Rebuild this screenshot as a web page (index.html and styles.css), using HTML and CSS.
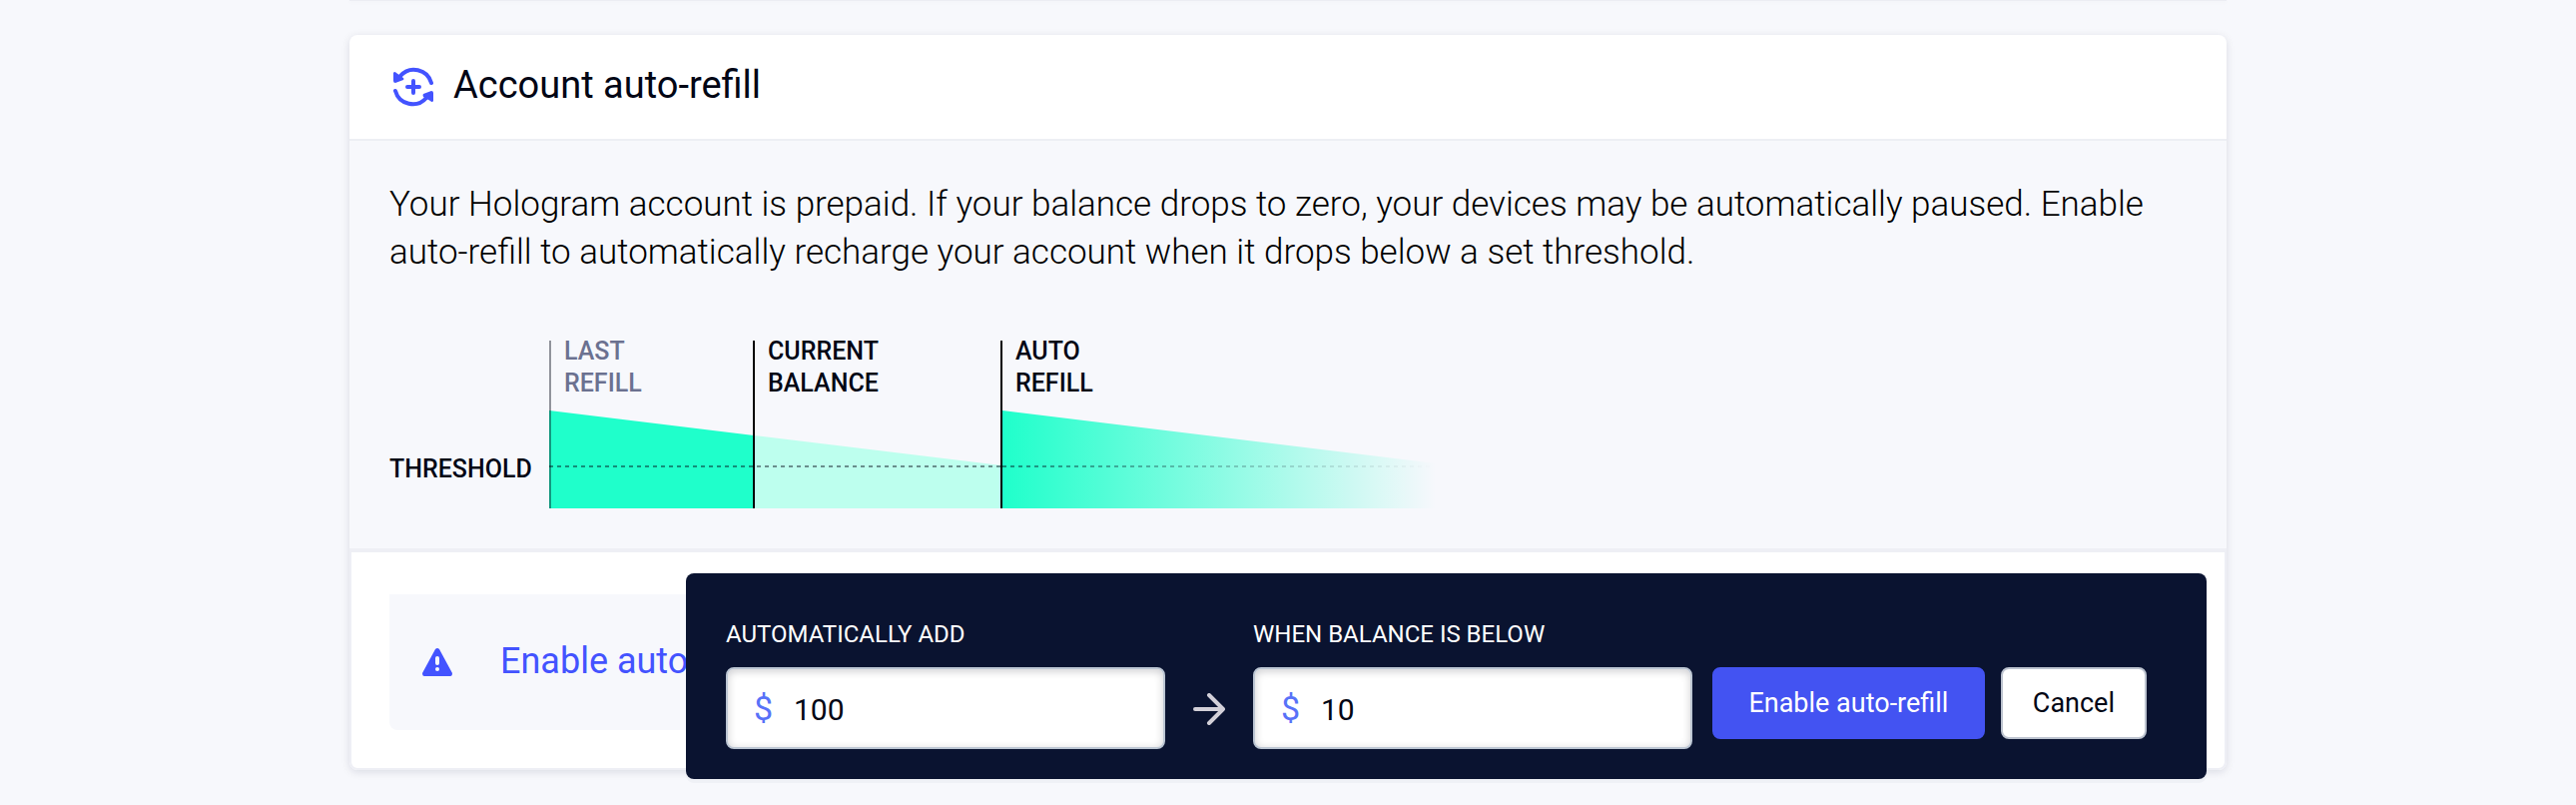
FILE: index.html
```html
<!DOCTYPE html>
<html lang="en">
<head>
<meta charset="utf-8">
<meta name="viewport" content="width=device-width, initial-scale=1">
<title>Account auto-refill</title>
<link rel="stylesheet" href="styles.css">
</head>
<body>
<main class="page">
  <div class="previous-card"></div>
  <section class="card">
    <header class="card-header">
      <svg class="refill-icon" viewBox="0 0 40 40" aria-hidden="true">
        <g fill="none" stroke="#4353ff" stroke-width="4" stroke-linecap="round">
          <path d="M7 9A18 18 0 0 1 38 16"/>
          <path d="M33 31A18 18 0 0 1 2 24"/>
          <path d="M20 14V26M14 20H26"/>
        </g>
        <path d="M0 6Q1 4 3 6L10 11Q11 12 10 13L2 16Q0 16 0 14Z" fill="#4353ff"/>
        <path d="M40 34Q39 36 37 34L30 30Q29 28 30 27L38 24Q40 24 40 26Z" fill="#4353ff"/>
      </svg>
      <h2 class="card-title">Account auto-refill</h2>
    </header>
    <div class="card-body">
      <p class="intro">Your Hologram account is prepaid. If your balance drops to zero, your devices may be automatically paused. Enable auto-refill to automatically recharge your account when it drops below a set threshold.</p>
      <div class="chart">
        <div class="threshold-label">THRESHOLD</div>
        <div class="plot">
          <svg class="plot-shape" viewBox="0 0 888 174" aria-hidden="true">
            <defs>
              <linearGradient id="fade" x1="0" x2="1" y1="0" y2="0">
                <stop offset="0" stop-color="#1fffcb"/>
                <stop offset="1" stop-color="#1fffcb" stop-opacity="0"/>
              </linearGradient>
              <linearGradient id="dash-fade" gradientUnits="userSpaceOnUse" x1="454" x2="888" y1="0" y2="0">
                <stop offset="0" stop-color="#020615" stop-opacity=".45"/>
                <stop offset="1" stop-color="#020615" stop-opacity="0"/>
              </linearGradient>
            </defs>
            <path d="M0 76L205 101V174H0Z" fill="#1fffcb"/>
            <path d="M205 101L453 131V174H205Z" fill="#bdffee"/>
            <path d="M454 76L888 129V174H454Z" fill="url(#fade)"/>
            <path d="M0 132H452" stroke="#020615" stroke-opacity=".45" stroke-width="2" stroke-dasharray="4 4"/>
            <path d="M454 131H888V133H454Z" fill="url(#dash-fade)" mask="url(#dashes)"/>
            <mask id="dashes" maskUnits="userSpaceOnUse" x="454" y="130" width="434" height="4">
              <path d="M454 132H888" stroke="#fff" stroke-width="4" stroke-dasharray="4 4"/>
            </mask>
            <path d="M0 6H2V174H0Z" fill="#020615" fill-opacity=".42"/>
            <path d="M204 6H206V174H204ZM452 6H454V174H452Z" fill="#000"/>
          </svg>
          <div class="plot-labels">
            <div class="plot-label plot-label-past">LAST<br>REFILL</div>
            <div class="plot-label">CURRENT<br>BALANCE</div>
            <div class="plot-label">AUTO<br>REFILL</div>
          </div>
        </div>
      </div>
    </div>
    <footer class="card-footer">
      <a class="notice" href="#refill-form">
        <svg class="warning-icon" viewBox="0 0 30 28" aria-hidden="true">
          <path d="M13 1Q15 -1 17 1L30 25Q30 28 28 28H2Q0 28 0 25Z" fill="#4353ff"/>
          <path d="M15 10V15" stroke="#f7f8fc" stroke-width="4" stroke-linecap="round"/>
          <circle cx="15" cy="21" r="2" fill="#f7f8fc"/>
        </svg>
        <span class="notice-text">Enable auto-refill</span>
      </a>
      <form class="refill-form" id="refill-form">
        <div class="field">
          <label class="field-label" for="add-amount">AUTOMATICALLY ADD</label>
          <div class="money-field">
            <span class="currency">$</span>
            <input class="money-input" id="add-amount" type="text" value="100">
          </div>
        </div>
        <svg class="arrow-icon" viewBox="0 0 32 32" aria-hidden="true">
          <path d="M2 16H30M16 2L30 16L16 30" fill="none" stroke="#d3d0d8" stroke-width="4" stroke-linecap="round" stroke-linejoin="round"/>
        </svg>
        <div class="field">
          <label class="field-label" for="below-amount">WHEN BALANCE IS BELOW</label>
          <div class="money-field">
            <span class="currency">$</span>
            <input class="money-input" id="below-amount" type="text" value="10">
          </div>
        </div>
        <div class="actions">
          <button class="button button-primary" type="button">Enable auto-refill</button>
          <button class="button button-plain" type="button">Cancel</button>
        </div>
      </form>
    </footer>
  </section>
</main>
</body>
</html>
```
FILE: styles.css
```css
* {
  box-sizing: border-box;
}

body {
  margin: 0;
  background: #f7f8fc;
  color: #020615;
  font-family: Roboto, "Liberation Sans", sans-serif;
}

.page {
  max-width: 1880px;
  min-height: 100vh;
  margin: 0 auto;
  padding-bottom: 32px;
}

.previous-card {
  height: 1px;
  margin-bottom: 34px;
  background: #ecedf3;
  box-shadow: 0 1px 4px rgba(10, 19, 48, 0.06);
}

.card {
  border-radius: 8px;
  background: #fff;
  box-shadow: 0 2px 8px rgba(10, 19, 48, 0.12);
}

.card-header {
  display: flex;
  align-items: center;
  gap: 20px;
  min-height: 106px;
  padding: 0 44px;
  border-bottom: 2px solid #edeff4;
}

.refill-icon {
  width: 40px;
  height: 40px;
}

.card-title {
  margin: 0;
  padding-bottom: 4px;
  font-size: 38px;
  font-weight: 400;
  line-height: 48px;
}

.card-body {
  padding: 40px;
  border-bottom: 2px solid #eeeff5;
  background: #f7f8fc;
}

.intro {
  margin: 0 0 58px;
  color: #000;
  font-size: 35px;
  font-weight: 300;
  line-height: 48px;
}

.chart {
  display: flex;
  align-items: flex-end;
  font-size: 25px;
  font-weight: 500;
  line-height: 32px;
}

.threshold-label {
  width: 160px;
  padding-bottom: 23px;
}

.plot {
  display: grid;
}

.plot-shape {
  grid-area: 1 / 1;
  width: 888px;
  height: 174px;
}

.plot-labels {
  display: grid;
  grid-area: 1 / 1;
  grid-template-columns: 204px 248px 436px;
}

.plot-label {
  padding: 1px 0 0 15px;
}

.plot-label-past {
  color: #6b7190;
}

.card-footer {
  position: relative;
  padding: 42px 38px 38px;
  border: 2px solid #eeeff5;
  border-radius: 0 0 8px 8px;
}

.notice {
  display: flex;
  align-items: center;
  gap: 48px;
  min-height: 136px;
  padding-left: 33px;
  border-radius: 0 0 8px 8px;
  background: #f7f8fc;
  color: #4353ff;
  text-decoration: none;
}

.warning-icon {
  width: 30px;
  height: 28px;
}

.notice-text {
  padding-bottom: 2px;
  font-size: 36px;
  line-height: 48px;
}

.refill-form {
  position: absolute;
  top: 21px;
  right: 18px;
  left: 335px;
  display: flex;
  align-items: flex-end;
  padding: 44px 60px 30px 40px;
  border-radius: 8px;
  background: #0a1330;
  box-shadow: 0 4px 0 rgba(10, 19, 48, 0.03);
}

.field {
  display: flex;
  flex: 1;
  flex-direction: column;
  gap: 16px;
  min-width: 0;
}

.field-label {
  color: #fff;
  font-size: 24px;
  line-height: 34px;
  white-space: nowrap;
}

.money-field {
  display: flex;
  align-items: center;
  height: 82px;
  padding: 0 26px;
  border: 2px solid #bcc6d3;
  border-radius: 8px;
  background: #fff;
  box-shadow: inset 0 2px 8px rgba(2, 6, 21, 0.2);
}

.currency {
  width: 40px;
  color: #5872f8;
  font-size: 34px;
  line-height: 40px;
}

.money-input {
  flex: 1;
  min-width: 0;
  padding: 4px 0 0;
  border: 0;
  outline: 0;
  background: transparent;
  color: #020615;
  font: 400 30px/40px Roboto, "Liberation Sans", sans-serif;
}

.arrow-icon {
  flex: none;
  width: 32px;
  height: 32px;
  margin: 0 28px 24px;
}

.actions {
  display: flex;
  flex: 0 0 455px;
  gap: 16px;
  height: 82px;
  padding-left: 20px;
}

.button {
  height: 72px;
  padding: 0 30px;
  border: 2px solid #4353f2;
  border-radius: 8px;
  font: 400 27px/32px Roboto, "Liberation Sans", sans-serif;
  white-space: nowrap;
}

.button-primary {
  flex: 1;
  background: #4353f2;
  color: #fff;
}

.button-plain {
  border-color: #bcc3cf;
  background: #fff;
  color: #020615;
}
```
